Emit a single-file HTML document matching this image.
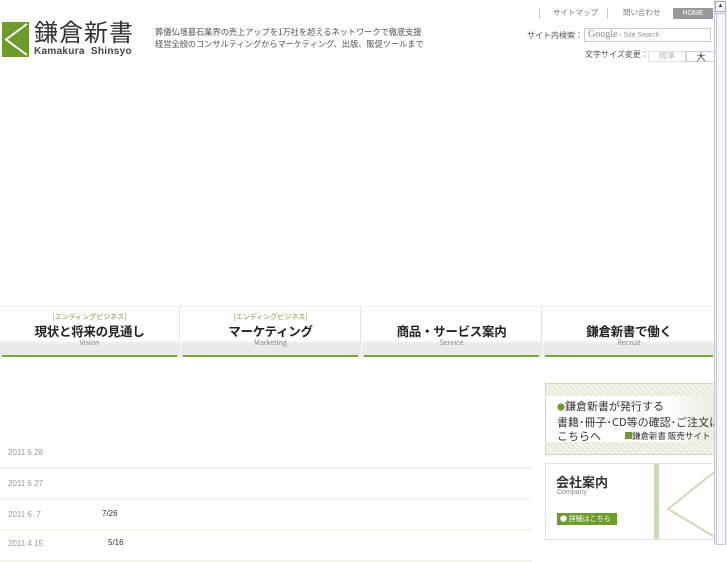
<!DOCTYPE html>
<html><head><meta charset="utf-8"><style>
*{margin:0;padding:0;box-sizing:border-box}
body{width:727px;height:545px;overflow:hidden;background:#fff;font-family:"Liberation Sans","Noto Sans CJK JP",sans-serif;position:relative;color:#333}
.a{position:absolute}
.jp{font-family:"Noto Sans CJK JP","Liberation Sans",sans-serif}
.nav{top:307px;height:50px;width:180px;border-right:1px solid #e4e4e4;text-align:center;background:linear-gradient(#fff 0,#fff 33px,#ececec 36px,#e8e8e8 48px)}
.nav .g{border-bottom:2px solid #7aa33a;position:absolute;left:2px;right:2px;bottom:0}
.nav .s{font-size:7px;color:#7a9a3a;position:absolute;top:5px;width:100%}
.nav .t{font-size:12.5px;font-weight:bold;color:#222;position:absolute;top:14px;width:100%;letter-spacing:-0.3px}
.nav .e{font-size:7px;color:#888;position:absolute;top:31px;width:100%}
.row{left:0;width:532px;height:31px;border-bottom:2px solid #f3f3ec;font-size:8px;color:#999}
</style></head><body>
<!-- logo -->
<svg class="a" style="left:2px;top:22px" width="27" height="35" viewBox="0 0 27 35"><rect width="27" height="35" fill="#6f9a2e"/><path d="M25 2 L4 17.5 L25 33" stroke="#fff" stroke-width="2" fill="none"/></svg>
<div class="a jp" style="left:34px;top:17px;font-size:24px;color:#333;letter-spacing:1px;line-height:28px">鎌倉新書</div>
<div class="a" style="left:34px;top:46px;font-size:10px;font-weight:bold;color:#444;letter-spacing:0.3px">Kamakura&nbsp; Shinsyo</div>
<div class="a jp" style="left:155px;top:26px;font-size:8.3px;color:#555;line-height:12px;letter-spacing:-0.1px">葬儀仏壇墓石業界の売上アップを1万社を超えるネットワークで徹底支援<br>経営全般のコンサルティングからマーケティング、出版、販促ツールまで</div>
<!-- top right -->
<div class="a" style="left:539px;top:8px;width:1px;height:11px;background:#ccc"></div>
<div class="a jp" style="left:553px;top:7px;font-size:7.5px;color:#777">サイトマップ</div>
<div class="a" style="left:607px;top:8px;width:1px;height:11px;background:#ccc"></div>
<div class="a jp" style="left:623px;top:7px;font-size:7.5px;color:#777">問い合わせ</div>
<div class="a" style="left:673px;top:8px;width:40px;height:11px;background:#999;color:#fff;font-size:7px;text-align:center;line-height:11px">HOME</div>
<div class="a jp" style="left:527px;top:30px;font-size:8px;color:#555">サイト内検索：</div>
<div class="a" style="left:584px;top:28px;width:127px;height:14px;border:1px solid #ccc;font-size:7px;color:#999;line-height:12px;padding-left:3px"><span style="font-family:'Liberation Serif',serif;font-size:10px;color:#888">Google</span><span style="font-size:4px">™</span> Site Search</div>
<div class="a jp" style="left:585px;top:49px;font-size:8px;color:#555">文字サイズ変更：</div>
<div class="a jp" style="left:648px;top:51px;width:38px;height:11px;border:1px solid #e0e0e0;font-size:8px;color:#bbb;text-align:center;line-height:10px">標準</div>
<div class="a jp" style="left:686px;top:51px;width:30px;height:11px;border:1px solid #ccc;font-size:9px;color:#333;text-align:center;line-height:10px">大</div>
<!-- nav -->
<div class="a" style="left:0;top:306px;width:715px;height:1px;background:#eee"></div>
<div class="a nav jp" style="left:0"><div class="s">[エンディングビジネス]</div><div class="t">現状と将来の見通し</div><div class="e">Vision</div><div class="g"></div></div>
<div class="a nav jp" style="left:181px"><div class="s">[エンディングビジネス]</div><div class="t">マーケティング</div><div class="e">Marketing</div><div class="g"></div></div>
<div class="a nav jp" style="left:362px"><div class="t">商品・サービス案内</div><div class="e">Service</div><div class="g"></div></div>
<div class="a nav jp" style="left:543px;width:172px;border-right:none"><div class="t">鎌倉新書で働く</div><div class="e">Recruit</div><div class="g"></div></div>
<!-- news -->
<div class="a row" style="top:438px"><span class="a" style="left:8px;top:10px">2011 6 28</span></div>
<div class="a row" style="top:469px"><span class="a" style="left:8px;top:10px">2011 6 27</span></div>
<div class="a row" style="top:500px"><span class="a" style="left:8px;top:10px">2011 6&nbsp; 7</span><span class="a" style="left:102px;top:9px;color:#333">7/26</span></div>
<div class="a row" style="top:531px"><span class="a" style="left:8px;top:8px">2011 4 15</span><span class="a" style="left:108px;top:7px;color:#333">5/16</span></div>
<!-- banner -->
<div class="a" style="left:545px;top:383px;width:170px;height:72px;border:1px solid #cfdcb8;background:repeating-linear-gradient(45deg,#e4ead8 0 2px,#f4f6ee 2px 4px)"></div>
<div class="a" style="left:546px;top:396px;width:169px;height:46px;background:linear-gradient(90deg,#fff 70%,#e8ede0)"></div>
<div class="a jp" style="left:557px;top:399px;font-size:11px;color:#333;line-height:14px;white-space:nowrap"><span style="color:#6f9a2e;font-size:8px">●</span>鎌倉新書が発行する<br>書籍･冊子･CD等の確認･ご注文は<br>こちらへ</div>
<div class="a jp" style="left:625px;top:430px;font-size:8.5px;color:#333;white-space:nowrap"><span style="display:inline-block;width:7px;height:7px;background:#6f9a2e"></span>鎌倉新書 販売サイト</div>
<!-- company -->
<div class="a" style="left:545px;top:463px;width:170px;height:77px;border:1px solid #e2e2e2;overflow:hidden">
<div class="a" style="left:108px;top:0;width:5px;height:77px;background:#cddcb8"></div>
<svg class="a" style="left:112px;top:0" width="60" height="77"><path d="M60 5 L10 45 L60 75" stroke="#cddcb8" stroke-width="2" fill="none"/></svg>
<div class="a jp" style="left:10px;top:8px;font-size:13px;font-weight:bold;color:#333">会社案内</div>
<div class="a" style="left:11px;top:25px;font-size:7px;color:#888">Company</div>
<div class="a jp" style="left:11px;top:49px;width:60px;height:12px;background:#6f9a2e;color:#fff;font-size:7px;line-height:12px;padding-left:3px">● 詳細はこちら</div>
</div>
<!-- scrollbar -->
<div class="a" style="left:714px;top:0;width:13px;height:545px;background:#eef0f4;border-left:1px solid #c8ccd4"></div>
<div class="a" style="left:715px;top:1px;width:11px;height:11px;background:#f4f5f7;border:1px solid #aab;font-size:6px;text-align:center;line-height:9px">▲</div>
<div class="a" style="left:716px;top:13px;width:10px;height:532px;background:#f6f7f9;border:1px solid #c4c8d0"></div>
</body></html>
